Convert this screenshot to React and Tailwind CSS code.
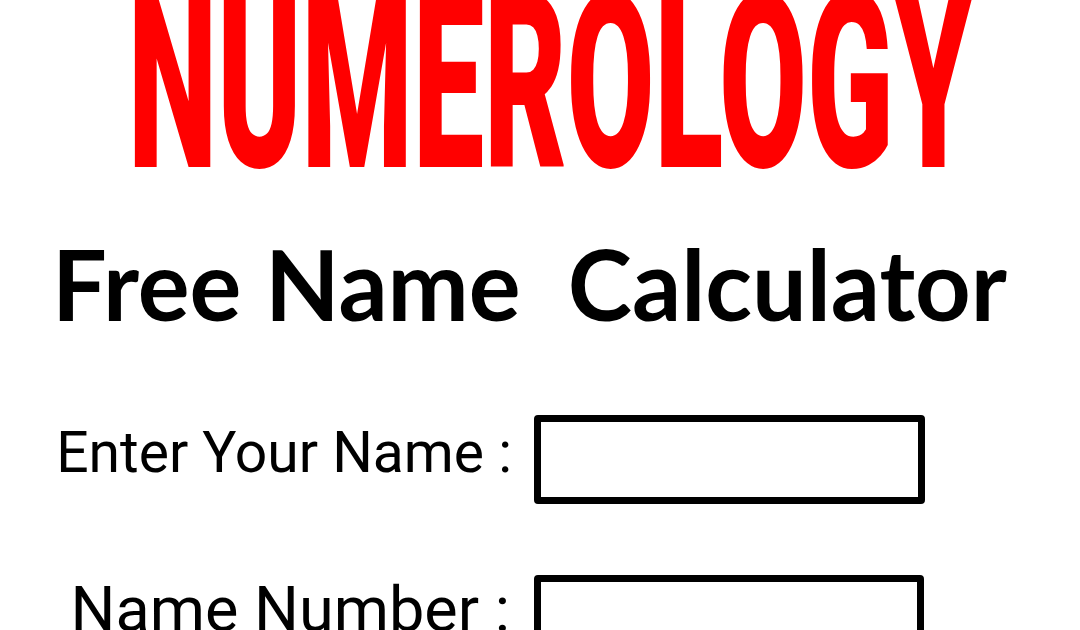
export default function App() {
  return (
    <div className="w-[1080px] h-[630px] overflow-hidden bg-white flex flex-col">
      {/* Headline */}
      <div className="h-[207px] pl-[128px] pt-[79px]">
        <span
          className="block whitespace-nowrap text-[127px] leading-none font-black text-[#ff0000] origin-bottom-left scale-y-[1.93]"
          style={{ fontFamily: "Roboto, sans-serif" }}
        >
          NUMEROLOGY
        </span>
      </div>

      {/* Sub heading */}
      <div className="mt-[29px] pl-[52px]">
        <span
          className="block whitespace-pre text-[97px] leading-none font-bold text-black"
          style={{ fontFamily: "Lato, sans-serif" }}
        >
          Free Name  Calculator
        </span>
      </div>

      {/* Form rows */}
      <div className="mt-[83px] flex flex-col gap-[71px]">
        <div className="flex items-start">
          <div className="w-[512px] flex justify-end pt-[9px]">
            <span
              className="text-[57px] leading-none text-black whitespace-nowrap"
              style={{ fontFamily: "Roboto, sans-serif" }}
            >
              Enter Your Name :
            </span>
          </div>
          <div className="ml-[22px] w-[391px] h-[89px] border-[7px] border-black rounded-[4px]" />
        </div>
        <div className="flex items-start">
          <div className="w-[510px] flex justify-end pt-[3px]">
            <span
              className="text-[63px] leading-none text-black whitespace-nowrap"
              style={{ fontFamily: "Roboto, sans-serif" }}
            >
              Name Number :
            </span>
          </div>
          <div className="ml-[24px] w-[390px] h-[89px] border-[7px] border-black rounded-[4px]" />
        </div>
      </div>
    </div>
  );
}
